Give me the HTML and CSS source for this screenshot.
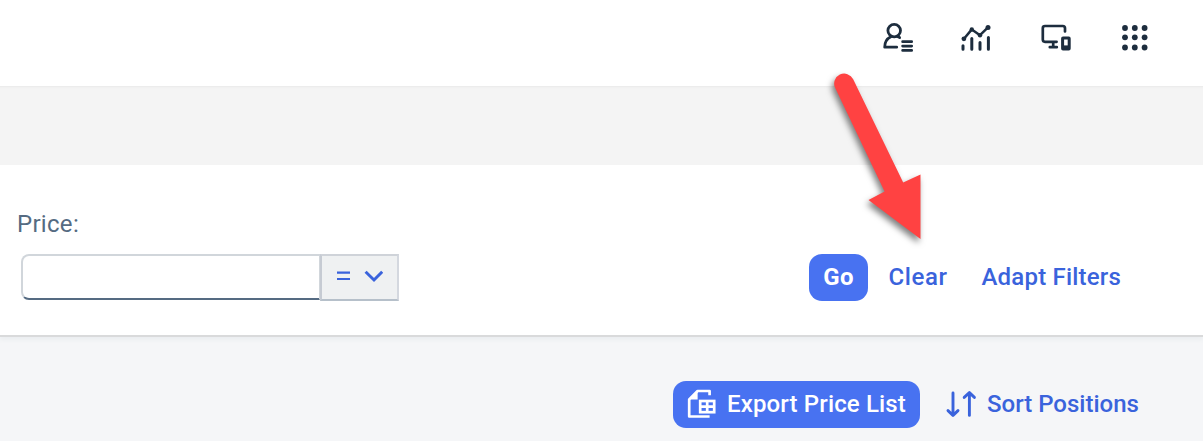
FILE: index.html
```html
<!DOCTYPE html>
<html lang="en">
<head>
<meta charset="utf-8">
<title>Price List</title>
<link rel="stylesheet" href="styles.css">
</head>
<body>
<header class="shell">
  <svg class="icon" width="34" height="34" viewBox="0 0 34 34" fill="none" stroke="#1d2d3e" stroke-width="2.8" stroke-linecap="round" stroke-linejoin="round">
    <circle cx="13.2" cy="9.6" r="6.3"/>
    <path d="M9.8 15.8C5.8 17.8 3.7 21 3.7 26.2H15.7M16.5 15.6L18.6 16.6"/>
    <path d="M21.6 20.7H30.7M21.6 25.1H30.7M21.6 29.4H30.7" stroke-width="2.7"/>
  </svg>
  <svg class="icon" width="34" height="34" viewBox="0 0 34 34" fill="none" stroke="#1d2d3e" stroke-width="2.5" stroke-linecap="round" stroke-linejoin="round">
    <path d="M4 17.8L11.8 8.4L20 14.2L28 6.4"/>
    <g fill="#1d2d3e" stroke="none"><circle cx="3.9" cy="17.8" r="2.4"/><circle cx="11.8" cy="8.5" r="2.2"/><circle cx="20" cy="14.2" r="2.2"/><circle cx="28" cy="6.4" r="2.5"/></g>
    <path d="M3 24.8V28.2M11.8 17.6V28.2M20 21.6V28.2M28.4 16.6V28.2" stroke-width="3"/>
  </svg>
  <svg class="icon" width="34" height="34" viewBox="0 0 34 34" fill="none" stroke="#1d2d3e" stroke-width="2.7" stroke-linecap="round" stroke-linejoin="round">
    <path d="M25 10.4V7.2Q25 5 22.8 5H5Q2.8 5 2.8 7.2V18.6Q2.8 20.8 5 20.8H16.6M13.2 21V26M9.8 26.2H16.8"/>
    <rect x="22.6" y="17.1" width="6.6" height="10.8" rx=".4" stroke-width="3"/>
    <path d="M22.6 24.4H29.4V27.8H22.6Z" fill="#1d2d3e" stroke="none"/>
  </svg>
  <svg class="icon" width="34" height="34" viewBox="0 0 34 34" fill="#1d2d3e">
    <circle cx="6" cy="7" r="2.9"/><circle cx="15.8" cy="7" r="2.9"/><circle cx="25.6" cy="7" r="2.9"/>
    <circle cx="6" cy="16.3" r="2.9"/><circle cx="15.8" cy="16.3" r="2.9"/><circle cx="25.6" cy="16.3" r="2.9"/>
    <circle cx="6" cy="26.5" r="2.9"/><circle cx="15.8" cy="26.5" r="2.9"/><circle cx="25.6" cy="26.5" r="2.9"/>
  </svg>
</header>
<div class="band"></div>
<section class="filters">
  <label class="label" for="price">Price:</label>
  <div class="filter-row">
    <div class="field">
      <input class="price" id="price" type="text">
      <button class="operator" aria-label="Operator">
        <svg width="48" height="24" viewBox="0 0 48 24" fill="none" stroke="#3a63dc">
          <path d="M2 8.7H15M2 15H15" stroke-width="2.2"/>
          <path d="M30.6 7.8L39 16L47.2 7.8" stroke-width="3"/>
        </svg>
      </button>
    </div>
    <div class="actions">
      <button class="btn primary go">Go</button>
      <button class="btn link clear">Clear</button>
      <button class="btn link adapt">Adapt Filters</button>
    </div>
  </div>
</section>
<section class="toolbar">
  <button class="btn primary export">
    <svg width="30" height="30" viewBox="0 0 30 30" fill="none" stroke="#fff" stroke-width="2.7">
      <path d="M22.6 6.2V2H10.6L2.2 10.4V27.5H22.6" stroke-linejoin="round"/>
      <path d="M2.2 10.6H10.6V2Z" fill="#fff" stroke="none"/>
      <rect x="13.2" y="12" width="14" height="11.2"/>
      <path d="M20.2 12V23.2M13.2 17.6H27.2"/>
    </svg>
    <span class="export-text">Export Price List</span>
  </button>
  <button class="btn link sort">
    <svg width="32" height="30" viewBox="0 0 32 30" fill="none" stroke="#3a63dc" stroke-width="2.9" stroke-linecap="round" stroke-linejoin="round">
      <path d="M8 4V26M3 21.6L8 26.4L13 21.6M24.4 26.4V4M19.2 8.4L24.4 3.6L29.4 8.4"/>
    </svg>
    <span class="sort-text">Sort Positions</span>
  </button>
</section>
<svg class="pointer" width="120" height="190" viewBox="0 0 120 190">
  <path d="M33.2 18.2A10 10 0 0 0 15.2 27L64.6 130.5L48.5 139L100.5 178V113.5L83.2 121.6Z" fill="#ff4242"/>
</svg>
</body>
</html>
```
FILE: styles.css
```css
* { box-sizing: border-box; }
body {
  position: relative;
  width: 1203px;
  height: 441px;
  margin: 0;
  overflow: hidden;
  background: #f5f6f8;
  font-family: Roboto, "Noto Sans", sans-serif;
  font-size: 24px;
}
button { margin: 0; padding: 0; border: 0; font: inherit; }
svg { display: block; flex: none; }
.shell {
  display: flex;
  justify-content: flex-end;
  gap: 45.5px;
  height: 86px;
  padding: 21px 50px 0 0;
  background: #fff;
}
.band { height: 79px; background: #f4f4f4; box-shadow: inset 0 3px 2px -2px #e9e9e9; }
.filters {
  height: 172px;
  padding: 43px 0 0 17px;
  background: #fff;
  border-bottom: 2px solid #d9dadb;
  box-shadow: 0 3px 4px #ebeef0;
}
.label {
  display: block;
  height: 46px;
  color: #556b82;
  line-height: 32px;
  letter-spacing: 0.3px;
}
.filter-row { display: flex; justify-content: space-between; padding: 0 82px 0 4px; }
.field { display: flex; }
.price {
  width: 299px;
  height: 46px;
  padding: 0 12px;
  border: 2px solid #d1d6db;
  border-right-width: 1px;
  border-bottom: 2px solid #556b82;
  border-radius: 8px 0 0 8px;
  background: #fff;
  font: inherit;
  outline: 0;
}
.operator {
  display: flex;
  align-items: center;
  justify-content: center;
  width: 79px;
  height: 47px;
  padding: 0 2px 3px 0;
  border: 2px solid #c6cbd3;
  border-top-color: #cfd3d9;
  border-right-color: #d4d8df;
  border-bottom-color: #b6c0ca;
  background: #eff1f2;
}
.actions { display: flex; }
.btn {
  display: flex;
  align-items: center;
  height: 47px;
  padding-bottom: 1px;
  font-weight: 500;
  line-height: 46px;
  white-space: nowrap;
}
.primary { background: #4872f1; color: #fff; border-radius: 13px; }
.link { background: transparent; color: #3a63dc; }
.go { justify-content: center; width: 59px; font-weight: 700; letter-spacing: 0.3px; }
.clear { width: 93px; padding-left: 20.5px; letter-spacing: 0.6px; }
.adapt { width: 160px; padding-left: 20.5px; letter-spacing: 0.2px; }
.toolbar { display: flex; height: 104px; padding: 44px 0 0 673px; }
.export { width: 247px; padding-left: 13.5px; gap: 10.5px; letter-spacing: 0.15px; }
.sort { padding-left: 25px; gap: 10px; }
.pointer {
  position: absolute;
  left: 820px;
  top: 61px;
  overflow: visible;
  filter: drop-shadow(-2px 4px 3px rgba(0, 0, 0, 0.5));
}
```
